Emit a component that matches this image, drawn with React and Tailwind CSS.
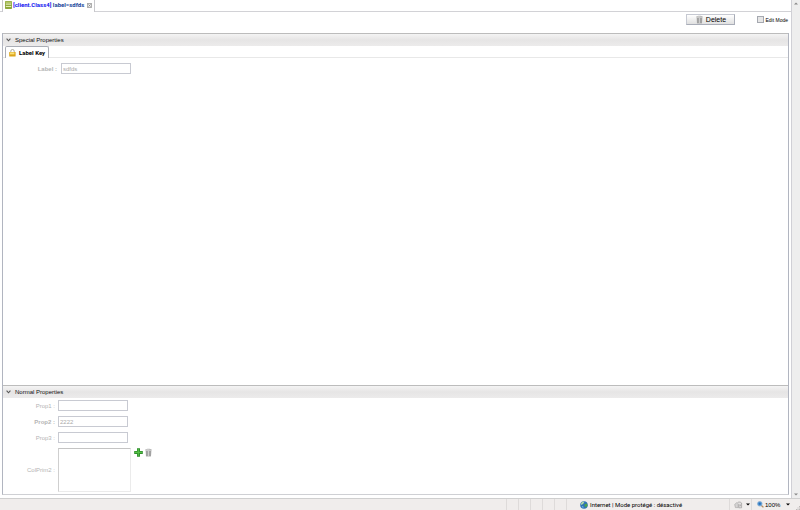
import React, { useState } from "react";

const TrashIcon = () => (
  <svg width="7" height="9" viewBox="0 0 7 9" className="shrink-0">
    <path d="M0.3 1.6C1.4.4 5.6.4 6.7 1.6v1H.3z" fill="#b6b6b6" />
    <path d="M0.6 2.6h5.8L6 8.4H1z" fill="#b2b2b2" />
    <path d="M2 3v5M5 3v5" stroke="#8e8e8e" strokeWidth="0.9" />
    <path d="M3.4 3v5" stroke="#d2d2d2" strokeWidth="0.9" />
    <path d="M1.4 1.8h3" stroke="#dedede" strokeWidth="0.7" />
  </svg>
);

const PlusIcon = () => (
  <svg width="9" height="9" viewBox="0 0 9 9" className="shrink-0">
    <path d="M3 0.3h3v2.7h2.8v3H6v2.8H3V6H0.2V3H3z" fill="#2f8f2b" />
    <path d="M3.7 1v2.8H1v1.2h2.8v3h1V5H8V3.8H4.9V1z" fill="#55c046" />
  </svg>
);

const ClassIcon = () => (
  <svg width="7" height="8" viewBox="0 0 7 8" className="shrink-0">
    <rect width="7" height="8" rx="0.8" fill="#8fa83c" />
    <rect x="0.6" y="0.6" width="5.8" height="1.6" fill="#b2c566" />
    <rect x="0.8" y="2.6" width="5.4" height="1" fill="#f0f5d2" />
    <rect x="0.8" y="5" width="5.4" height="1" fill="#e4edb8" />
  </svg>
);

const LockIcon = () => (
  <svg width="7" height="8" viewBox="0 0 7 8" className="shrink-0">
    <path d="M1.8 4V2.2a1.7 1.7 0 0 1 3.4 0V4" fill="none" stroke="#aaa79b" strokeWidth="1" />
    <rect x="0.2" y="3" width="6.4" height="4.6" rx="0.5" fill="#dca51a" />
    <rect x="1" y="3.4" width="4.4" height="2" fill="#fae27a" />
  </svg>
);

const CloseIcon = () => (
  <svg width="5" height="5" viewBox="0 0 5 5">
    <rect x="0.5" y="0.5" width="4" height="4" fill="#ececec" stroke="#a8a8a8" strokeWidth="0.9" />
    <path d="M1.4 1.4l2.2 2.2M3.6 1.4L1.4 3.6" stroke="#808080" strokeWidth="0.7" />
  </svg>
);

const ChevronIcon = () => (
  <svg width="5" height="4" viewBox="0 0 5 4" className="shrink-0">
    <path d="M0.6 0.7L2.5 2.8L4.4 0.7" fill="none" stroke="#555" strokeWidth="1.1" />
  </svg>
);

const GlobeIcon = () => (
  <svg width="8" height="8" viewBox="0 0 8 8" className="shrink-0">
    <circle cx="4" cy="4" r="3.8" fill="#2f74b8" />
    <path d="M1 2.4C2 .8 3.6.5 4.2 1.2L3.4 2.6 2.2 3.4 1.2 4z" fill="#b4dca4" />
    <path d="M4.4 3.4l2.4-.8.6 1.6L6 6.6 4.8 5.6z" fill="#4ba34d" />
    <path d="M1.6 5l1.8.4-.2 1.8z" fill="#7cc3e8" />
  </svg>
);

const ShieldIcon = () => (
  <svg width="9" height="8" viewBox="0 0 9 8" className="shrink-0">
    <path d="M.7 3.4L3 1.4l1.2 1v4.2H1.4z" fill="#d5d3d3" stroke="#a3a1a1" strokeWidth="0.6" />
    <path d="M4 1.2C5.6.8 6.8 1.2 7.6 2v4.8H4.8V3.2" fill="#e4e2e2" stroke="#9b9999" strokeWidth="0.7" />
    <path d="M5.6 3.4h1.2v1.8H5.6z" fill="#a8a6a6" />
  </svg>
);

const MagnifierIcon = () => (
  <svg width="7" height="7" viewBox="0 0 7 7" className="shrink-0">
    <path d="M4.2 4.2L6.4 6.4" stroke="#b58d62" strokeWidth="1.3" />
    <circle cx="2.8" cy="2.8" r="2.3" fill="#4f97d8" stroke="#86aacb" strokeWidth="0.7" />
    <path d="M2.8 1.7v2.2M1.7 2.8h2.2" stroke="#1f5fa8" strokeWidth="0.7" />
  </svg>
);

const ResizeGrip = () => (
  <svg width="4" height="4" viewBox="0 0 4 4" className="shrink-0 self-end">
    <path d="M3 0h1v1H3zM1.5 1.5h1v1h-1zM3 1.5h1v1H3zM0 3h1v1H0zM1.5 3h1v1h-1zM3 3h1v1H3z" fill="#bdb9b8" />
  </svg>
);

const Caret = ({ up }) => (
  <svg width="4" height="3" viewBox="0 0 4 3" className="shrink-0">
    <path d={up ? "M0 2.5L2 .5l2 2z" : "M0 .5h4L2 2.5z"} fill="currentColor" />
  </svg>
);

const SectionHeader = ({ title, open, onClick }) => (
  <h2 className="shrink-0">
    <button
      type="button"
      aria-expanded={open}
      onClick={onClick}
      className="flex h-[13px] w-full items-center gap-1 border-t border-[#bcbcbc] bg-linear-to-b from-[#f4f4f4] via-[#e6e5e5] to-[#ecebeb] pl-[3px] text-left text-[6px] leading-[8px] text-[#111]"
    >
      <ChevronIcon />
      {title}
    </button>
  </h2>
);

const inputClass =
  "h-[11px] w-[70px] rounded-none border border-[#c8cad2] bg-white px-px text-[6px] leading-[8px] text-[#aaa]";

const properties = [
  { id: "prop1", label: "Prop1 :", value: "" },
  { id: "prop2", label: "Prop2 :", value: "2222", bold: true },
  { id: "prop3", label: "Prop3 :", value: "" },
];

const App = () => {
  const [editMode, setEditMode] = useState(false);
  const [specialOpen, setSpecialOpen] = useState(true);
  const [normalOpen, setNormalOpen] = useState(true);

  return (
    <div className="flex h-screen flex-col overflow-hidden bg-white font-['Liberation_Sans',Arial,sans-serif] text-[6px] leading-[8px] text-black">
      <div className="flex min-h-0 flex-1">
        <main className="flex min-w-0 flex-1 flex-col">
          {/* Document tabs */}
          <div className="flex h-[12px] shrink-0 border-b border-[#d2d2d6] pl-[2px]">
            <div className="-mb-px flex items-center gap-px border-x border-[#c8c8cc] bg-white px-[2px] pb-[2px]">
              <ClassIcon />
              <span className="font-['Roboto',sans-serif] font-bold whitespace-nowrap text-[#17459a]">
                <span className="text-[#1212f0]">[client.Class4]</span> label=sdfds
              </span>
              <button type="button" aria-label="Close tab" className="ml-[2px]">
                <CloseIcon />
              </button>
            </div>
          </div>

          {/* Toolbar */}
          <div className="flex h-[21px] shrink-0 items-start justify-end gap-[22px] pt-[2px] pr-[3px]">
            <button
              type="button"
              className="flex h-[11px] w-[49px] items-center justify-center gap-[3px] border border-[#c6c9d2] border-r-[#a9adb8] border-b-[#a9adb8] bg-linear-to-b from-white to-[#e0e0e0] text-[7px] leading-[8px]"
            >
              <TrashIcon />
              Delete
            </button>
            <label className="flex h-[11px] items-center gap-px text-[5px] leading-[8px] whitespace-nowrap">
              <input
                type="checkbox"
                checked={editMode}
                onChange={(e) => setEditMode(e.target.checked)}
                className="size-[7px] appearance-none border border-[#a5a8b0] bg-[#e6e6e6] checked:bg-[#17459a]"
              />
              Edit Mode
            </label>
          </div>

          {/* Property panels */}
          <div className="mx-[2px] mb-[3px] flex min-h-0 flex-1 flex-col border border-t-0 border-[#b1b5c0] border-b-[#cfd0d4]">
            <SectionHeader
              title="Special Properties"
              open={specialOpen}
              onClick={() => setSpecialOpen(!specialOpen)}
            />
            {specialOpen && (
              <section className="flex min-h-0 flex-1 flex-col">
                <div className="flex h-[12px] shrink-0 border-b border-[#e8e8e8] pl-[2px]">
                  <button
                    type="button"
                    className="-mb-px flex items-center gap-[3px] rounded-t-[2px] border border-b-0 border-[#aaadb5] bg-white px-[3px] font-['Roboto',sans-serif] text-[6px] leading-[8px] font-bold whitespace-nowrap"
                  >
                    <LockIcon />
                    Label Key
                  </button>
                </div>
                <div className="flex items-center gap-1 pt-[5px]">
                  <label htmlFor="label" className="w-[54px] text-right font-bold text-[#b4b4b4]">
                    Label :
                  </label>
                  <input id="label" defaultValue="sdfds" disabled={!editMode} className={inputClass} />
                </div>
              </section>
            )}

            <SectionHeader
              title="Normal Properties"
              open={normalOpen}
              onClick={() => setNormalOpen(!normalOpen)}
            />
            {normalOpen && (
              <section className="flex h-[96px] shrink-0 flex-col gap-[5px] pt-[2px]">
                {properties.map((prop) => (
                  <div key={prop.id} className="flex items-center gap-[3px]">
                    <label
                      htmlFor={prop.id}
                      className={`w-[52px] text-right text-[#b4b4b4] ${prop.bold ? "font-bold" : ""}`}
                    >
                      {prop.label}
                    </label>
                    <input
                      id={prop.id}
                      defaultValue={prop.value}
                      disabled={!editMode}
                      className={inputClass}
                    />
                  </div>
                ))}
                <div className="flex gap-[3px]">
                  <label htmlFor="colprim2" className="w-[52px] self-center text-right text-[#b4b4b4]">
                    ColPrim2 :
                  </label>
                  <select
                    id="colprim2"
                    size="4"
                    disabled={!editMode}
                    className="h-[44px] w-[73px] appearance-none overflow-hidden rounded-none border border-[#ebebeb] border-t-[#c4c4c4] border-l-[#cfcfcf] bg-white"
                  />
                  <div className="flex items-start gap-[2px]">
                    <button type="button" aria-label="Add value">
                      <PlusIcon />
                    </button>
                    <button type="button" aria-label="Remove value">
                      <TrashIcon />
                    </button>
                  </div>
                </div>
              </section>
            )}
          </div>
        </main>

        {/* Scrollbar */}
        <div className="flex w-[9px] shrink-0 flex-col items-center justify-between border-l border-[#d0d0d6] bg-[#eeeeee] py-[2px] text-[#888]">
          <Caret up />
          <Caret />
        </div>
      </div>

      {/* Browser status bar */}
      <footer className="flex h-[12px] shrink-0 border-t border-[#cfcfcf] bg-[#f0edec]">
        <div className="flex flex-1 justify-end">
          {[1, 2, 3, 4, 5].map((n) => (
            <div key={n} className="w-[12px] border-l border-[#dedbda]" />
          ))}
        </div>
        <div className="flex w-[163px] items-center gap-[2px] border-l border-[#dedbda] pl-[13px] font-['Roboto',sans-serif] whitespace-nowrap">
          <GlobeIcon />
          Internet | Mode protégé : désactivé
        </div>
        <button
          type="button"
          aria-label="Protected mode"
          className="flex w-[22px] items-center gap-[3px] border-l border-[#dedbda] pl-1"
        >
          <ShieldIcon />
          <Caret />
        </button>
        <button
          type="button"
          className="flex w-[45px] items-center gap-px border-l border-[#dedbda] pl-[5px] text-[6px] leading-[8px]"
        >
          <MagnifierIcon />
          100%
          <span className="ml-auto pr-[6px]">
            <Caret />
          </span>
        </button>
        <ResizeGrip />
      </footer>
    </div>
  );
};

export default App;
